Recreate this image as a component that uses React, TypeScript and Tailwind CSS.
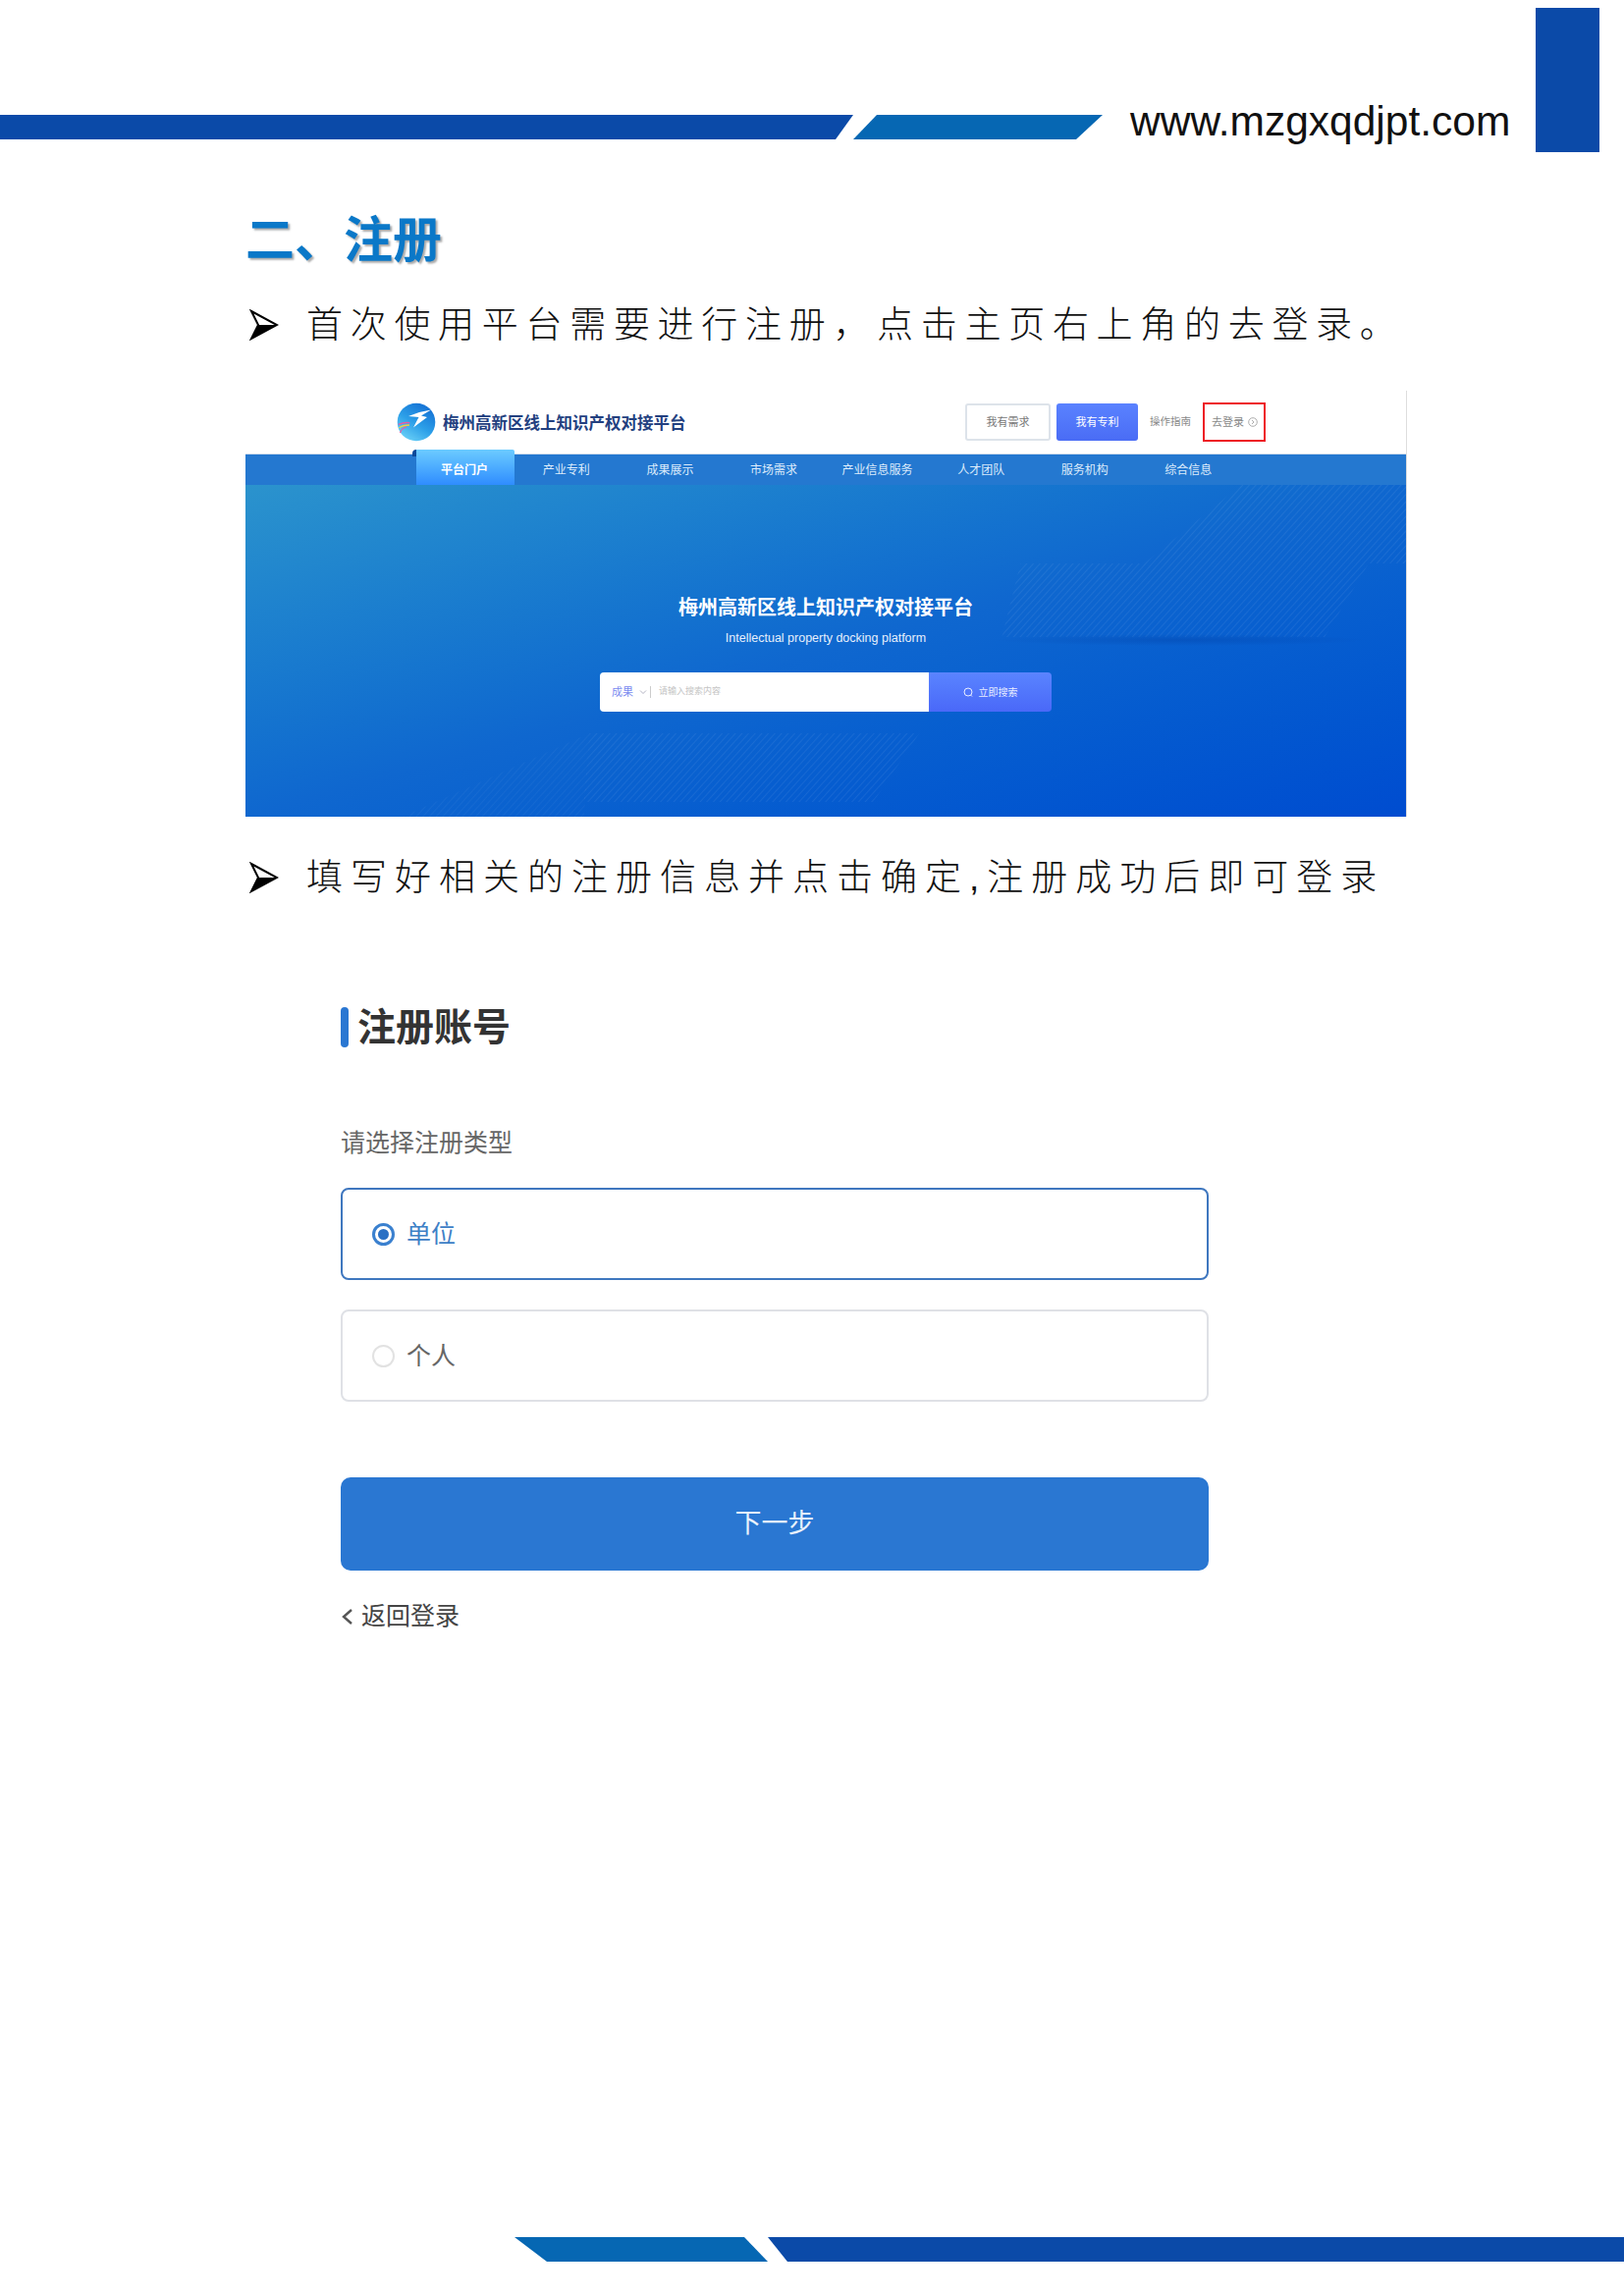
const cjk = "font-['Liberation_Sans','Noto_Sans_CJK_SC',sans-serif]";

function Arrow() {
  return (
    <svg width="30" height="32" viewBox="0 0 30 32" className="shrink-0">
      <path d="M2 2 L28 16 L2 30 L9 16 Z" fill="#fff" stroke="#000" strokeWidth="2" strokeLinejoin="miter" />
      <path d="M2 30 L28 16 L9 16 Z" fill="#000" />
    </svg>
  );
}

function Bullet({ children, tracking }: { children: React.ReactNode; tracking: string }) {
  return (
    <div className="flex items-center h-[50px] pl-[4px]">
      <Arrow />
      <span className={`ml-[28px] mt-[2px] text-[37px] leading-[50px] text-[#111] font-light whitespace-nowrap ${tracking}`}>{children}</span>
    </div>
  );
}

function Logo() {
  return (
    <svg width="40" height="40" viewBox="0 0 40 40" className="shrink-0">
      <defs>
        <linearGradient id="lg" x1="0.8" y1="0.05" x2="0.25" y2="0.95">
          <stop offset="0" stopColor="#1470d4" />
          <stop offset="0.55" stopColor="#2c9fe8" />
          <stop offset="1" stopColor="#66cdf6" />
        </linearGradient>
      </defs>
      <circle cx="20" cy="20" r="19.3" fill="url(#lg)" />
      <path d="M35 7.5 L23 10 L12 14 L22.5 15 L17 25.5 L31 15 L25 13.5 Z" fill="#fff" />
      <path d="M1.7 22.3 Q8 20 13.3 20.7" stroke="#e85aa8" strokeWidth="1.4" fill="none" />
      <path d="M2.5 26 Q6 23 13 23" stroke="#f0d040" strokeWidth="1.4" fill="none" />
      <path d="M3.5 31 Q5 26 10 25" stroke="#e85aa8" strokeWidth="1.2" fill="none" />
    </svg>
  );
}

const nav = ["产业专利", "成果展示", "市场需求", "产业信息服务", "人才团队", "服务机构", "综合信息"];

function HeroDecor() {
  return (
    <svg className="absolute inset-0 w-full h-full pointer-events-none" viewBox="0 0 1183 338" preserveAspectRatio="none">
      <defs>
        <pattern id="hatch" width="5" height="5" patternUnits="userSpaceOnUse" patternTransform="rotate(-48)">
          <line x1="0" y1="0" x2="5" y2="0" stroke="#ffffff" strokeOpacity="0.13" strokeWidth="1" />
        </pattern>
        <radialGradient id="shade">
          <stop offset="0" stopColor="#003a9e" stopOpacity="0.32" />
          <stop offset="1" stopColor="#003a9e" stopOpacity="0" />
        </radialGradient>
      </defs>
      <polygon points="1015,0 1183,0 1183,80 916,80" fill="url(#hatch)" />
      <polygon points="790,80 1145,80 1100,155 771,155" fill="url(#hatch)" />
      <polygon points="351,253 687,253 640,323 345,323" fill="url(#hatch)" />
      <polygon points="351,253 160,338 345,338" fill="url(#hatch)" opacity="0.6" />
      <ellipse cx="954" cy="158" rx="190" ry="6" fill="url(#shade)" />
    </svg>
  );
}

function PlatformShot() {
  return (
    <div className="mt-[42px] w-[1183px] h-[434px] flex flex-col border-r border-[#ddd]">
      <div className="h-[64px] flex items-center pl-[154px]">
        <Logo />
        <span className="ml-[7px] mt-[2px] text-[16.5px] font-bold text-[#23407f] whitespace-nowrap">梅州高新区线上知识产权对接平台</span>
        <div className="ml-auto flex items-center mr-[143px]">
          <div className="w-[87px] h-[38px] flex items-center justify-center rounded-[3px] border-2 border-[#dde3ea] text-[11px] text-[#777]">我有需求</div>
          <div className="ml-[6px] w-[83px] h-[38px] flex items-center justify-center rounded-[3px] bg-gradient-to-b from-[#5a82ff] to-[#4a6cf5] text-[11px] text-white">我有专利</div>
          <span className="ml-[12px] text-[10.5px] text-[#888] whitespace-nowrap">操作指南</span>
          <div className="ml-[12px] w-[64px] h-[40px] border-2 border-[#ee1c25] flex items-center pl-[7px] text-[11px] text-[#888] whitespace-nowrap">
            去登录
            <svg width="10" height="10" viewBox="0 0 10 10" className="ml-[4px]">
              <circle cx="5" cy="5" r="4.3" fill="none" stroke="#999" strokeWidth="0.8" />
              <path d="M4 3 L6 5 L4 7" fill="none" stroke="#999" strokeWidth="0.8" />
            </svg>
          </div>
        </div>
      </div>
      <div className="h-[32px] bg-[#2478d0] flex items-center pl-[174px] shrink-0 border-t border-[#cfdcec]">
        <div className="relative self-end w-[100px] h-[36px] pt-[6px] pr-[2px] bg-gradient-to-b from-[#6ccbff] to-[#2f8cff] rounded-tr-[2px] flex items-center justify-center text-[12px] font-bold text-white">
          <div className="absolute -left-[4px] top-0 w-[4px] h-[7px] bg-[#0d4a9a] rounded-tl-[4px]" />
          平台门户
        </div>
        {nav.map((n) => (
          <div key={n} className="w-[105.6px] text-center text-[12px] text-[#dcebfb] whitespace-nowrap">{n}</div>
        ))}
      </div>
      <div className="relative flex-1 flex flex-col items-center pt-[112px] bg-gradient-to-br from-[#2b93cd] via-[#0f67cf] to-[#004cd0]">
        <HeroDecor />
        <div className="relative text-[20px] leading-[26px] font-bold text-white">梅州高新区线上知识产权对接平台</div>
        <div className="relative mt-[9px] text-[12.5px] leading-[18px] text-[#e6effc] font-['Liberation_Sans',sans-serif]">Intellectual property docking platform</div>
        <div className="relative mt-[26px] flex w-[460px] h-[40px] rounded-[4px] overflow-hidden">
          <div className="w-[335px] bg-white flex items-center pl-[12px]">
            <span className="text-[11px] text-[#7b8cf0]">成果</span>
            <svg width="8" height="6" viewBox="0 0 8 6" className="ml-[6px]"><path d="M1 1.5 L4 4.5 L7 1.5" fill="none" stroke="#aab" strokeWidth="0.9" /></svg>
            <div className="ml-[3px] w-px h-[12px] bg-[#ccc]" />
            <span className="ml-[8px] text-[9px] text-[#c4c4c4] whitespace-nowrap">请输入搜索内容</span>
          </div>
          <div className="flex-1 bg-gradient-to-b from-[#5a84ff] to-[#4a68f8] flex items-center justify-center text-[10px] text-[#e8edff]">
            <svg width="10" height="10" viewBox="0 0 10 10" className="mr-[6px]"><circle cx="5" cy="5" r="4" fill="none" stroke="#e8edff" strokeWidth="1" /><path d="M7.5 8 L9 9.5" stroke="#e8edff" strokeWidth="1" /></svg>
            立即搜索
          </div>
        </div>
      </div>
    </div>
  );
}

function RadioCard({ active, label }: { active: boolean; label: string }) {
  return (
    <div className={`w-[884px] h-[94px] rounded-[8px] flex items-center pl-[30px] bg-white ${active ? "border-2 border-[#3f77bf]" : "border-2 border-[#dfe1e6]"}`}>
      {active ? (
        <div className="w-[23px] h-[23px] rounded-full border-[3px] border-[#3a80cf] flex items-center justify-center">
          <div className="w-[11px] h-[11px] rounded-full bg-[#2a70c4]" />
        </div>
      ) : (
        <div className="w-[23px] h-[23px] rounded-full border-2 border-[#e2e2e2]" />
      )}
      <span className={`ml-[12px] text-[25px] leading-none ${active ? "text-[#3d80c6]" : "text-[#666]"}`}>{label}</span>
    </div>
  );
}

function RegisterForm() {
  return (
    <div className="mt-[106px] ml-[97px] w-[884px] flex flex-col">
      <div className="flex items-center h-[42px]">
        <div className="w-[8px] h-[41px] rounded-[4px] bg-[#2a77d2]" />
        <span className="ml-[9px] text-[39px] leading-none font-bold text-[#333]">注册账号</span>
      </div>
      <div className="mt-[82px] text-[25px] leading-[30px] text-[#666]">请选择注册类型</div>
      <div className="mt-[31px] flex flex-col gap-[30px]">
        <RadioCard active label="单位" />
        <RadioCard active={false} label="个人" />
      </div>
      <div className="mt-[77px] h-[95px] rounded-[10px] bg-[#2a77d2] flex items-center justify-center text-[27px] text-[#e8f1fb]">下一步</div>
      <div className="mt-[32px] flex items-center h-[30px] text-[25px] text-[#444]">
        <svg width="14" height="20" viewBox="0 0 14 20"><path d="M11 3 L3 10 L11 17" fill="none" stroke="#555" strokeWidth="2.4" /></svg>
        <span className="ml-[7px]">返回登录</span>
      </div>
    </div>
  );
}

export default function App() {
  return (
    <div className={`w-[1654px] h-[2339px] bg-white flex flex-col overflow-hidden ${cjk}`}>
      <header className="mt-[8px] h-[147px] flex items-start shrink-0">
        <div className="mt-[109px] w-[869px] h-[25px] bg-[#0b4aa8] [clip-path:polygon(0_0,100%_0,calc(100%-18px)_100%,0_100%)]" />
        <div className="mt-[109px] w-[254px] h-[25px] bg-[#0667b3] [clip-path:polygon(24px_0,100%_0,calc(100%-27px)_100%,0_100%)]" />
        <div className="mt-[91px] ml-[28px] w-[412px] text-[42.5px] leading-[50px] text-[#111] font-['Liberation_Sans',sans-serif]">www.mzgxqdjpt.com</div>
        <div className="ml-[1px] w-[65px] h-[147px] bg-[#0b4aa8]" />
      </header>
      <main className="ml-[250px] w-[1183px] flex flex-col flex-1">
        <h2 className="mt-[60px] h-[60px] text-[50px] leading-[60px] font-bold text-[#0a78c8] [text-shadow:2px_2px_2px_#aaa]">二、注册</h2>
        <div className="mt-[31px]"><Bullet tracking="tracking-[7.7px]">首次使用平台需要进行注册，点击主页右上角的去登录。</Bullet></div>
        <PlatformShot />
        <div className="mt-[37px]"><Bullet tracking="tracking-[8px]">填写好相关的注册信息并点击确定,注册成功后即可登录</Bullet></div>
        <RegisterForm />
      </main>
      <footer className="mb-[35px] flex justify-end shrink-0">
        <div className="w-[258px] h-[25px] bg-[#0667b3] [clip-path:polygon(0_0,234px_0,100%_100%,33px_100%)]" />
        <div className="w-[872px] h-[25px] bg-[#0b4aa8] [clip-path:polygon(0_0,100%_0,100%_100%,20px_100%)]" />
      </footer>
    </div>
  );
}
